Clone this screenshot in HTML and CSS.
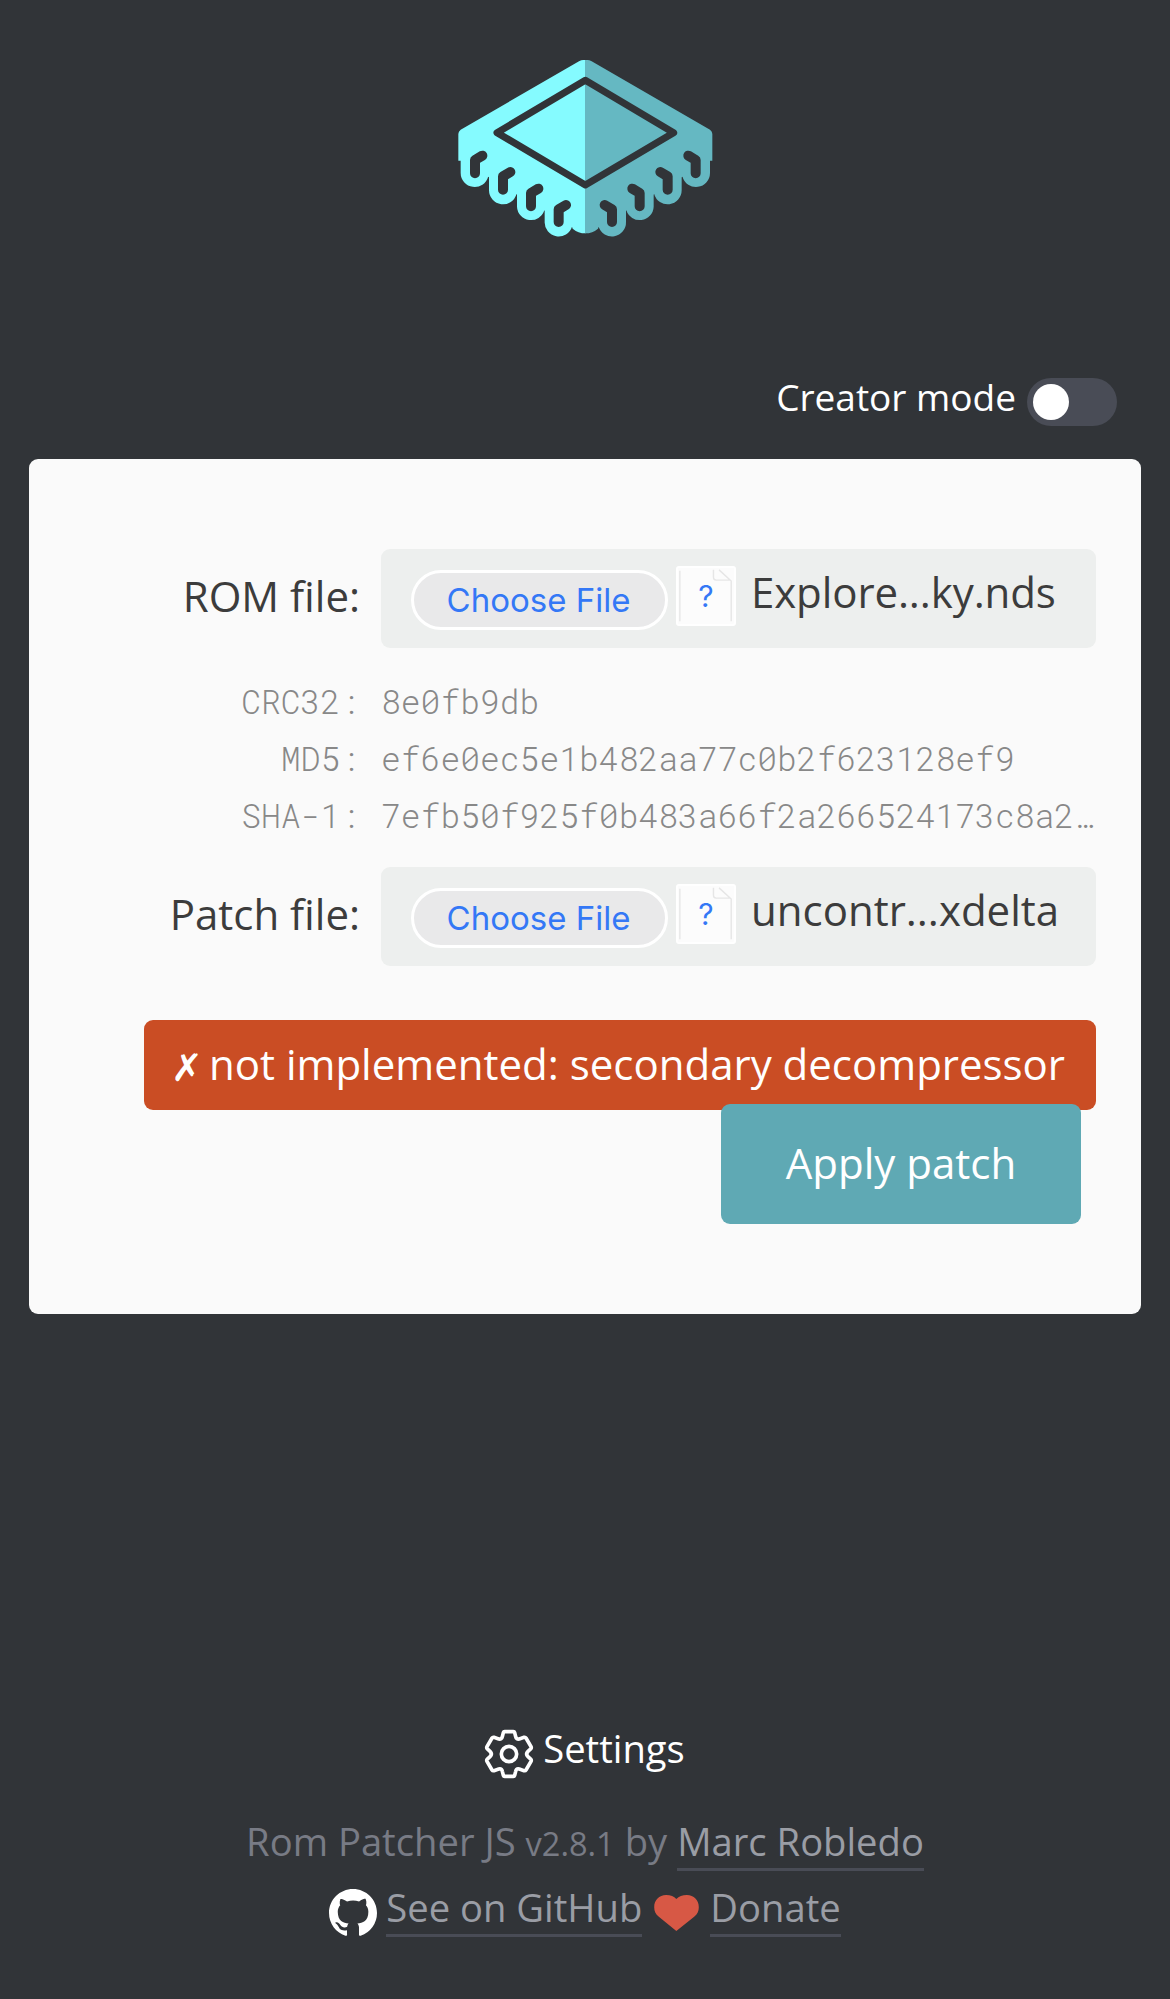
FILE: index.html
```html
<!DOCTYPE html>
<html lang="en">
<head>
<meta charset="utf-8">
<title>Rom Patcher JS</title>
<link rel="stylesheet" href="styles.css">
</head>
<body>
<svg class="defs" width="0" height="0">
  <defs>
    <g id="chip-half">
      <path d="M437 60H430Q424 60 417 64L62 269Q55 274 55 282V362H62V399A42 42 0 0 0 144.500 410L147 412V451A42 42 0 0 0 229.500 462L231 464V500A42 42 0 0 0 313 511L314 513V546A42 42 0 0 0 396 560L398 566Q414 580 437 580Z"/>
      <path class="cut" d="M127 347L105 360V400M211 396L189 409V449M295 446L273 459V499M378 495L356 508V546"/>
    </g>
  </defs>
</svg>
<header class="header">
  <svg class="logo" viewBox="0 0 870 630">
    <use href="#chip-half" fill="#85fbff"/>
    <use href="#chip-half" fill="#65b8c2" transform="translate(872 0) scale(-1 1)"/>
    <path class="diamond" d="M436 121L171 278L436 435L701 278Z"/>
  </svg>
</header>
<main class="main">
  <div class="mode">
    <span class="mode-label">Creator mode</span>
    <span class="switch"><span class="knob"></span></span>
  </div>
  <section class="card">
    <div class="row">
      <label class="label">ROM file:</label>
      <div class="file">
        <button class="choose">Choose File</button>
        <span class="doc"><svg class="page" viewBox="0 0 60 60"><path d="M2 3V57M57 57V14L44 2M38 2V10Q38 13 41 13H56"/></svg><span class="mark">?</span></span>
        <span class="name name-rom">Explore...ky.nds</span>
      </div>
    </div>
    <dl class="hashes">
      <dt>CRC32:</dt><dd>8e0fb9db</dd>
      <dt>MD5:</dt><dd>ef6e0ec5e1b482aa77c0b2f623128ef9</dd>
      <dt>SHA-1:</dt><dd>7efb50f925f0b483a66f2a266524173c8a2…</dd>
    </dl>
    <div class="row">
      <label class="label">Patch file:</label>
      <div class="file">
        <button class="choose">Choose File</button>
        <span class="doc"><svg class="page" viewBox="0 0 60 60"><path d="M2 3V57M57 57V14L44 2M38 2V10Q38 13 41 13H56"/></svg><span class="mark">?</span></span>
        <span class="name">uncontr...xdelta</span>
      </div>
    </div>
    <div class="error"><span class="cross">✗</span><span class="error-text">not implemented: secondary decompressor</span></div>
    <button class="apply">Apply patch</button>
  </section>
</main>
<footer class="footer">
  <div class="line settings">
    <svg class="gear" viewBox="0 0 144 144"><path d="M59 5H85Q88 5 89 8L92 20Q94 29 103 27L117 22Q121 21 123 24L138 50Q140 54 137 57L129 64Q121 72 129 80L137 87Q140 90 138 94L123 120Q121 123 117 122L103 117Q94 115 92 124L89 136Q88 139 85 139H59Q56 139 55 136L52 124Q50 115 41 117L27 122Q23 123 21 120L6 94Q4 90 7 87L15 80Q23 72 15 64L7 57Q4 54 6 50L21 24Q23 21 27 22L41 27Q50 29 52 20L55 8Q56 5 59 5Z"/><circle cx="72" cy="72" r="23"/></svg>
    <span class="settings-text">Settings</span>
  </div>
  <div class="line credits"><span>Rom Patcher JS</span><small>v2.8.1</small><span>by</span><a class="link">Marc Robledo</a></div>
  <div class="line links">
    <svg class="github" viewBox="0 0 16 16"><path d="M8 0C3.58 0 0 3.58 0 8c0 3.54 2.29 6.53 5.47 7.59.4.07.55-.17.55-.38 0-.19-.01-.82-.01-1.49-2.01.37-2.53-.49-2.69-.94-.09-.23-.48-.94-.82-1.13-.28-.15-.68-.52-.01-.53.63-.01 1.08.58 1.23.82.72 1.21 1.87.87 2.33.66.07-.52.28-.87.51-1.07-1.78-.2-3.64-.89-3.64-3.95 0-.87.31-1.59.82-2.15-.08-.2-.36-1.02.08-2.12 0 0 .67-.21 2.2.82.64-.18 1.32-.27 2-.27s1.36.09 2 .27c1.53-1.04 2.2-.82 2.2-.82.44 1.1.16 1.92.08 2.12.51.56.82 1.27.82 2.15 0 3.07-1.87 3.75-3.65 3.95.29.25.54.73.54 1.48 0 1.07-.01 1.93-.01 2.2 0 .21.15.46.55.38A8.01 8.01 0 0 0 16 8c0-4.42-3.58-8-8-8z"/></svg>
    <a class="link">See on GitHub</a>
    <svg class="heart" viewBox="0 0 135 109"><path d="M67 109L14 66C4 58 0 49 0 37C0 15 15 0 36 0C50 0 60 4 67 12C75 4 85 0 99 0C120 0 135 15 135 37C135 49 131 58 121 66Z"/></svg>
    <a class="link">Donate</a>
  </div>
</footer>
</body>
</html>
```
FILE: styles.css
```css
* { box-sizing: border-box; }
body {
  margin: 0;
  height: 1999px;
  background: #313438;
  font-family: "Open Sans", sans-serif;
  font-size: 42px;
  color: #fff;
  white-space: nowrap;
}
.defs { display: block; }
button { border: 0; padding: 0; margin: 0; }

.header { height: 378px; padding-top: 40px; }
.logo { display: block; width: 290px; height: 210px; margin-left: 440px; }
.cut { fill: none; stroke: #313438; stroke-width: 30; stroke-linecap: round; stroke-linejoin: round; }
.diamond { fill: none; stroke: #313438; stroke-width: 21; stroke-linejoin: round; }

.main { padding: 0 29px; }
.mode { display: flex; justify-content: flex-end; height: 81px; padding-right: 24px; gap: 11px; }
.mode-label { font-size: 37px; line-height: 38px; }
.switch { width: 90px; height: 48px; padding: 6px; border-radius: 24px; background: #494c56; }
.knob { display: block; width: 36px; height: 36px; border-radius: 50%; background: #fff; }

.card {
  display: flex;
  flex-direction: column;
  height: 855px;
  padding: 90px 45px 0 115px;
  border-radius: 9px;
  background: #fafafa;
  color: #3c3c3c;
}
.row { display: flex; justify-content: space-between; height: 99px; }
.label { width: 216px; text-align: right; line-height: 94px; }
.file {
  display: flex;
  width: 715px;
  height: 99px;
  padding: 0 0 0 30px;
  border-radius: 9px;
  background: #edefee;
}
.choose {
  width: 257px;
  height: 60px;
  margin-top: 21px;
  padding-right: 2px;
  border: 3px solid #fff;
  border-radius: 30px;
  background: #e9e9ea;
  color: #3478f6;
  font: 33px/54px Inter, sans-serif;
}
.doc {
  display: grid;
  width: 60px;
  height: 60px;
  margin: 17px 0 0 8px;
  border-radius: 3px;
  border: 2px solid #fff;
  background: #fcfcfc;
  grid-template: 56px / 56px;
  place-items: center;
}
.doc > * { grid-area: 1 / 1; }
.page { width: 56px; height: 56px; fill: none; stroke: #e6e6e6; stroke-width: 1.5; }
.mark { color: #3478f6; font: 30px/54px Inter, sans-serif; }
.name { margin-left: 15px; line-height: 85px; }
.name-rom { letter-spacing: -0.1px; }

.hashes {
  display: grid;
  grid-template-columns: 216px 715px;
  grid-auto-rows: 57px;
  justify-content: space-between;
  height: 219px;
  margin: 0;
  padding-top: 25px;
  font: 300 33px/57px "Roboto Mono", "Liberation Mono", monospace;
  color: #888;
}
.hashes dt { text-align: right; }
.hashes dd { margin: 0; }

.error {
  display: flex;
  height: 90px;
  margin-top: 54px;
  padding-left: 27px;
  border-radius: 9px;
  background: #ca4d24;
  color: #fff;
  line-height: 87px;
}
.cross { width: 38px; font: 38px/96px "DejaVu Sans", sans-serif; }
.apply {
  align-self: flex-end;
  width: 360px;
  height: 120px;
  margin: -6px 15px 0 0;
  padding-bottom: 3px;
  border-radius: 9px;
  background: #5fa9b4;
  color: #fff;
  font: 42px/117px "Open Sans", sans-serif;
}

.footer { padding-top: 408px; font-size: 38.2px; color: #787b85; }
.line { display: flex; justify-content: center; }
.settings { height: 97px; color: #fff; line-height: 53px; gap: 10px; }
.gear { width: 48px; height: 48px; margin-top: 8px; fill: none; stroke: #fff; stroke-width: 11; overflow: visible; }
.credits { height: 66px; line-height: 44px; gap: 10px; }
.credits small { font-size: 32.5px; line-height: 49px; }
.link { height: 52px; line-height: 44px; border-bottom: 3px solid #494c56; color: #9a9da5; }
.links { gap: 9px; }
.github { width: 48px; height: 48px; margin-top: 4px; fill: #fff; }
.heart { width: 45px; height: 36px; margin: 10px 2px 0 3px; fill: #d75845; }
```
